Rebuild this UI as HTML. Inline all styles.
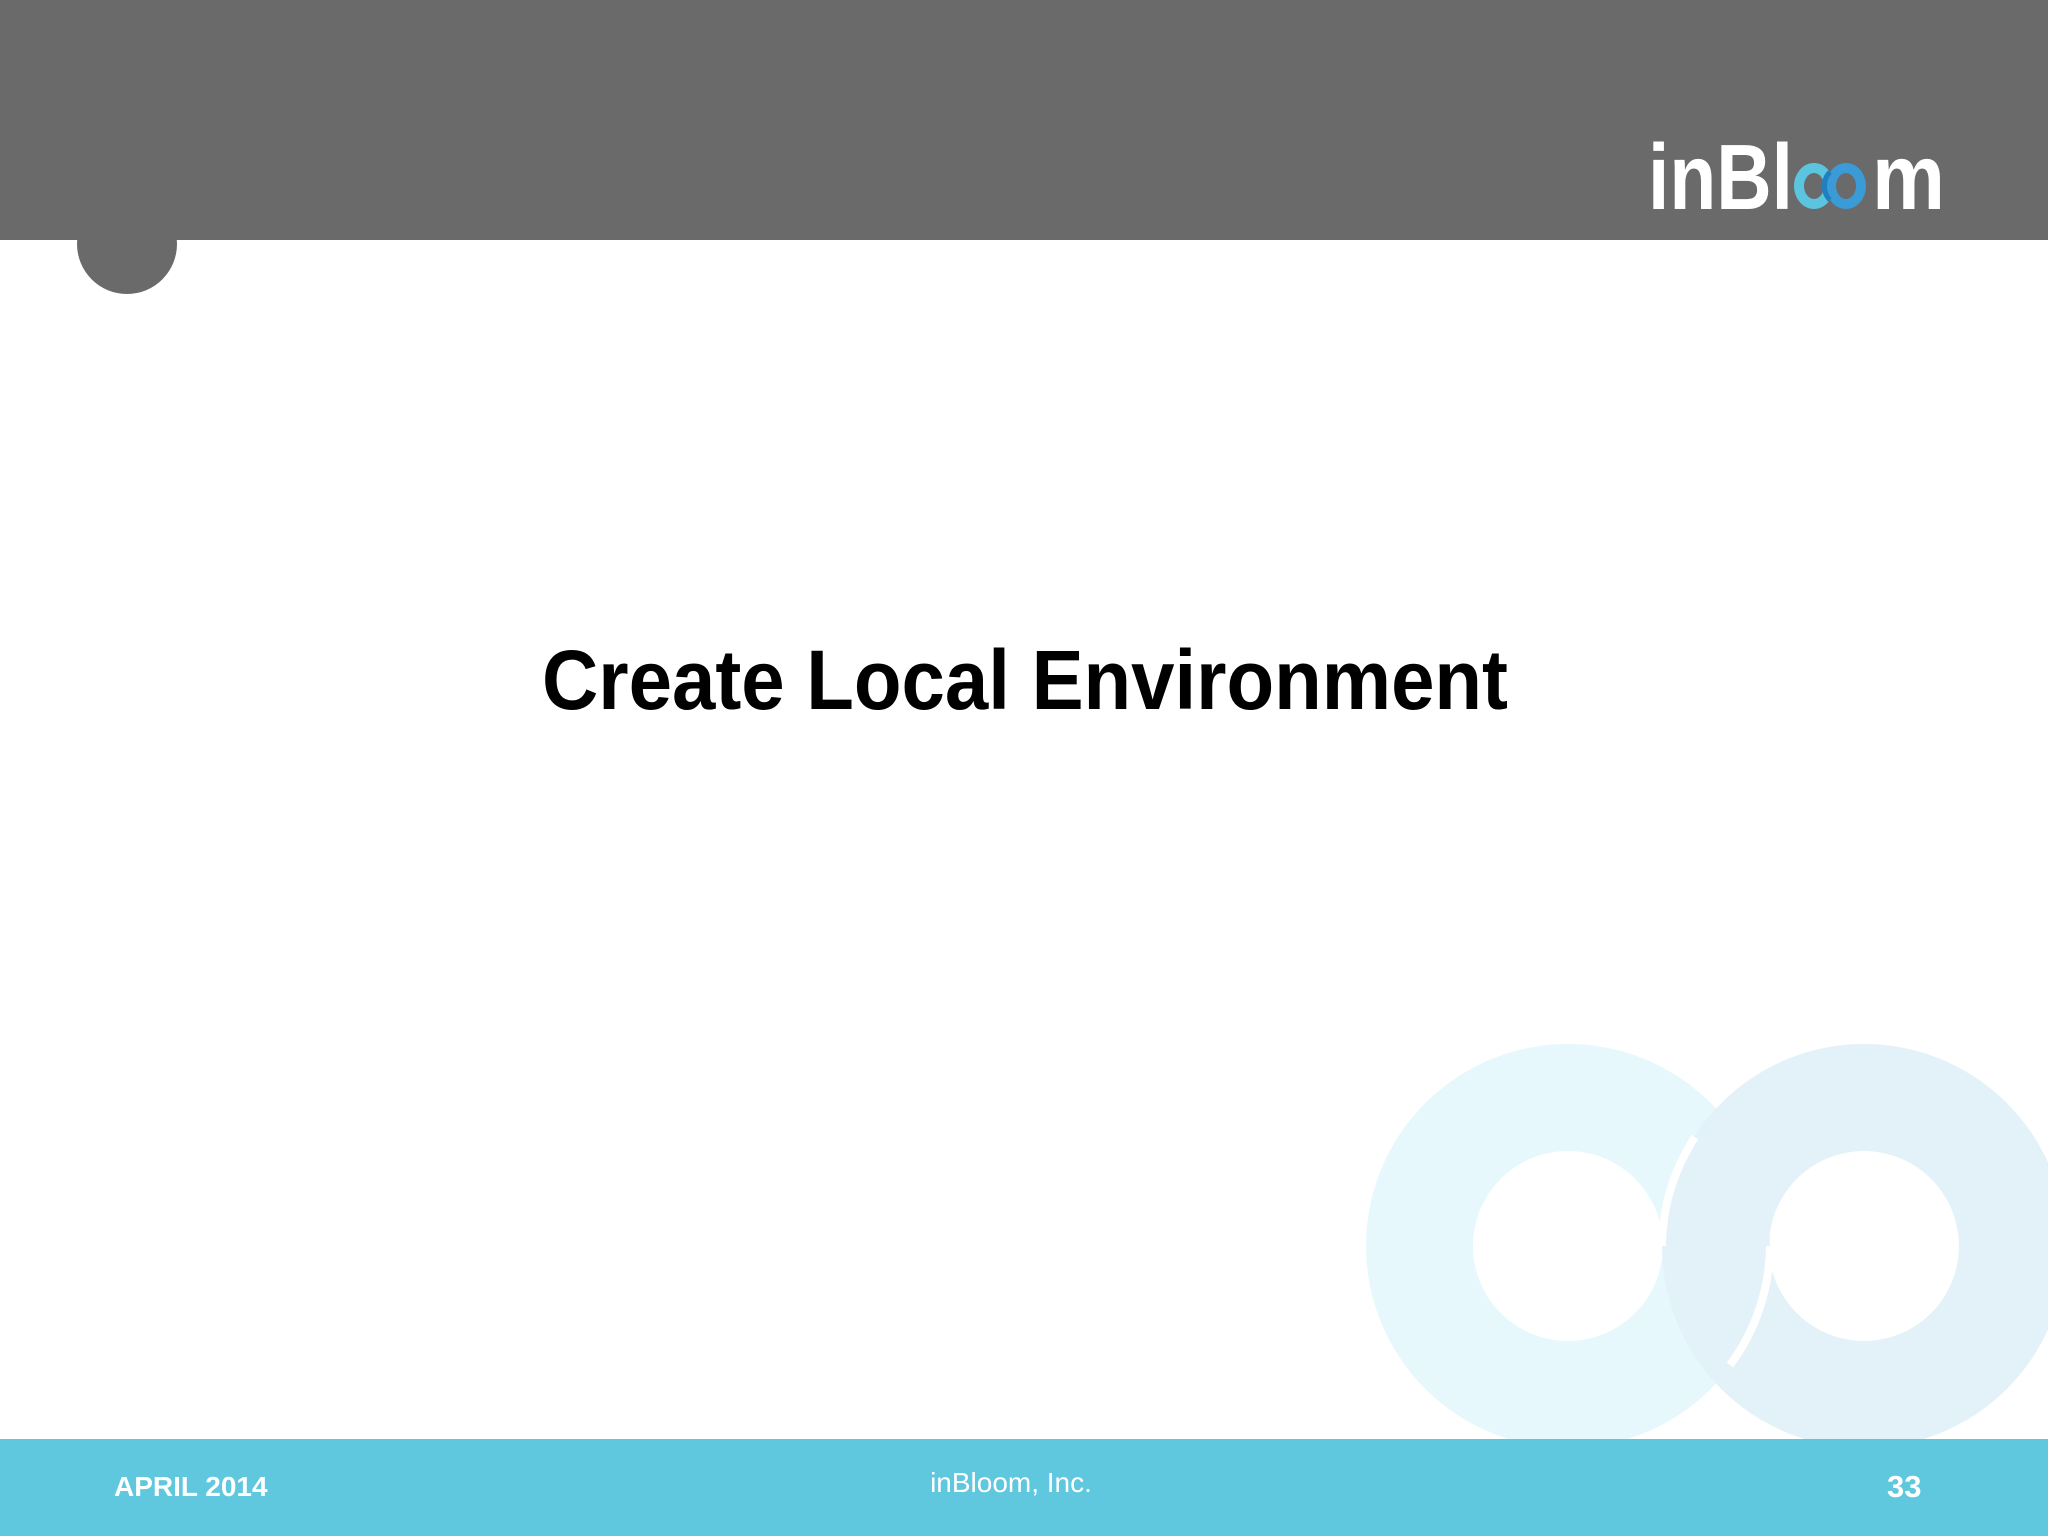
<!DOCTYPE html>
<html><head><meta charset="utf-8"><style>
html,body{margin:0;padding:0;width:2048px;height:1536px;overflow:hidden;background:#fff;font-family:"Liberation Sans",sans-serif}
</style></head><body>
<svg width="2048" height="1536" viewBox="0 0 2048 1536" xmlns="http://www.w3.org/2000/svg" style="position:absolute;left:0;top:0">
<rect x="0" y="0" width="2048" height="240" fill="#6a6a6a"/>
<circle cx="127" cy="244" r="50" fill="#6a6a6a"/>
<path fill-rule="evenodd" fill="#e6f8fc" d="M1568 1044 a202 202 0 1 0 0.1 0 Z M1568 1151 a95 95 0 1 1 -0.1 0 Z"/>
<path fill-rule="evenodd" fill="#e3f1f8" d="M1864 1044 a202 202 0 1 0 0.1 0 Z M1864 1151 a95 95 0 1 1 -0.1 0 Z"/>
<path d="M1695 1137 A202 202 0 0 0 1662 1246" fill="none" stroke="#fff" stroke-width="8"/>
<path d="M1770 1246 A202 202 0 0 1 1730 1365" fill="none" stroke="#fff" stroke-width="8"/>
<rect x="0" y="1439" width="2048" height="97" fill="#5fc7de"/>
<text x="1648" y="209" font-family="Liberation Sans" font-weight="bold" font-size="93" fill="#fff" textLength="145" lengthAdjust="spacingAndGlyphs">inBl</text>
<ellipse cx="1814" cy="186" rx="15" ry="18" fill="none" stroke="#5bc4df" stroke-width="10"/>
<ellipse cx="1846" cy="186" rx="15" ry="18" fill="none" stroke="#3a9bd6" stroke-width="10"/>
<path d="M1830 172 A15 18 0 0 0 1830 200" fill="none" stroke="#1f7fc0" stroke-width="5"/>
<text x="1872" y="209" font-family="Liberation Sans" font-weight="bold" font-size="93" fill="#fff" textLength="73" lengthAdjust="spacingAndGlyphs">m</text>
<text x="1025" y="709" text-anchor="middle" font-family="Liberation Sans" font-weight="bold" font-size="84" fill="#000" textLength="966" lengthAdjust="spacingAndGlyphs">Create Local Environment</text>
<text x="114" y="1496" font-family="Liberation Sans" font-weight="bold" font-size="28" fill="#fff">APRIL 2014</text>
<text x="1011" y="1492" text-anchor="middle" font-family="Liberation Sans" font-size="28" fill="#fff">inBloom, Inc.</text>
<text x="1887" y="1497" font-family="Liberation Sans" font-weight="bold" font-size="31" fill="#fff">33</text>
</svg>
</body></html>
